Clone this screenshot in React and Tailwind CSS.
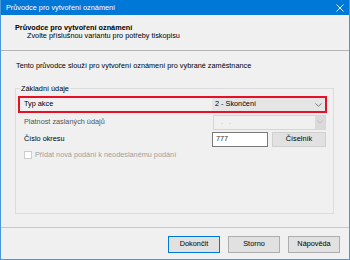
export default function App() {
  const font = { fontFamily: '"Liberation Sans", Arial, sans-serif' };
  return (
    <div
      className="w-[350px] h-[260px] bg-[#f0f0f0] border-x border-b border-[#4a98dc] flex flex-col text-[7.3px] text-black overflow-hidden"
      style={font}
    >
      {/* Title bar */}
      <div className="h-[15px] bg-[#0078d7] -mx-px flex items-center justify-between pl-[6px] pr-[6px] text-white shrink-0">
        <span className="leading-none">Průvodce pro vytvoření oznámení</span>
        <svg width="8" height="8" viewBox="0 0 8 8" className="mt-[1px]">
          <path d="M0.5 0.5 L7.5 7.5 M7.5 0.5 L0.5 7.5" stroke="white" strokeWidth="0.9" />
        </svg>
      </div>
      {/* Header */}
      <div className="h-[36px] shrink-0 border-b border-[#b4b4b4] pl-[14px] pt-[9px] leading-[8px]">
        <div className="font-bold">Průvodce pro vytvoření oznámení</div>
        <div className="pl-[12px]">Zvolte příslušnou variantu pro potřeby tiskopisu</div>
      </div>
      {/* Body */}
      <div className="flex-1 flex flex-col pl-[14px] pr-[15px]">
        <div className="mt-[10px] pl-[1px] leading-[9px]">Tento průvodce slouží pro vytvoření oznámení pro vybrané zaměstnance</div>
        <div className="relative mt-[18px] border border-[#dcdcdc] h-[126px] pl-[2px] pr-[6px]">
          <span className="absolute -top-[5px] left-[4px] bg-[#f0f0f0] px-[1px] leading-[9px]">Základní údaje</span>
          <div className="mt-[7px] flex flex-col">
            {/* Typ akce - red box */}
            <div className="h-[17px] border-2 border-[#e81123] flex items-center">
              <span className="pl-[4px] flex-1">Typ akce</span>
              <div className="w-[113px] h-[13px] bg-[#e5e5e5] flex items-center justify-between pl-[3px] pr-[3px]">
                <span>2 - Skončení</span>
                <svg width="7" height="4" viewBox="0 0 7 4">
                  <path d="M0.5 0.5 L3.5 3.3 L6.5 0.5" stroke="#606060" fill="none" strokeWidth="0.8" />
                </svg>
              </div>
            </div>
            {/* Platnost */}
            <div className="h-[18px] flex items-center">
              <span className="pl-[6px] flex-1 text-[#555555]">Platnost zaslaných údajů</span>
              <div className="w-[113px] h-[15px] border border-[#d6d6d6] bg-[#f0f0f0] flex items-center justify-between mr-[1px]">
                <span className="pl-[7px] text-[#b0b0b0] tracking-[2px] leading-none">. .</span>
                <div className="w-[10px] h-[13px] bg-[#dadada] flex items-center justify-center">
                  <svg width="6" height="4" viewBox="0 0 6 4">
                    <path d="M0.5 0.5 L3 3 L5.5 0.5" stroke="#b8b8b8" fill="none" strokeWidth="0.8" />
                  </svg>
                </div>
              </div>
            </div>
            {/* Číslo okresu */}
            <div className="h-[16px] flex items-center">
              <span className="pl-[6px] flex-1">Číslo okresu</span>
              <div className="w-[56px] h-[15px] border border-[#7a7a7a] bg-white flex items-center pl-[3px] text-[#333]">777</div>
              <div className="w-[54px] h-[15px] ml-[4px] mr-[1px] border border-[#d0d0d0] bg-[#e1e1e1] flex items-center justify-center">Číselník</div>
            </div>
            {/* Checkbox */}
            <div className="h-[16px] flex items-center pl-[6px] text-[#a0a0a0]">
              <div className="w-[8px] h-[8px] border border-[#cccccc] bg-white mr-[3px]" />
              <span>Přidat nová podání k neodeslanému podání</span>
            </div>
          </div>
        </div>
      </div>
      {/* Footer */}
      <div className="h-[32px] shrink-0 border-t border-[#c8c8c8] flex items-start justify-end pt-[8px] pr-[9px] gap-[8px]">
        <div className="w-[52px] h-[17px] border border-[#0078d7] bg-[#e1e1e1] flex items-center justify-center">Dokončit</div>
        <div className="w-[52px] h-[17px] border border-[#adadad] bg-[#e1e1e1] flex items-center justify-center">Storno</div>
        <div className="w-[52px] h-[17px] border border-[#adadad] bg-[#e1e1e1] flex items-center justify-center">Nápověda</div>
      </div>
    </div>
  );
}
